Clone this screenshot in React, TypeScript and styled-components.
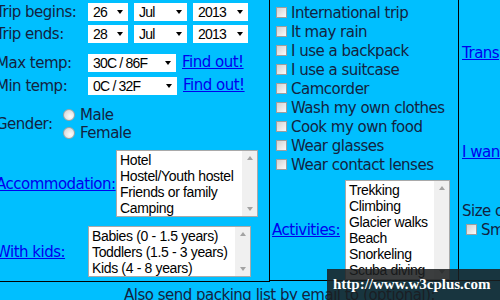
import React from "react";
import styled, { createGlobalStyle } from "styled-components";

const GlobalStyle = createGlobalStyle`
  html, body {
    margin: 0;
    padding: 0;
  }
  body {
    width: 500px;
    height: 300px;
    overflow: hidden;
    background: #00bfff;
    color: #13233f;
    font-family: "DejaVu Sans", Verdana, sans-serif;
    font-size: 15px;
    letter-spacing: -0.5px;
  }
`;

const Page = styled.div`
  position: relative;
  width: 500px;
  height: 300px;
  overflow: hidden;
`;

const FormTable = styled.div`
  display: grid;
  grid-template-columns: 274px 189px 120px;
  margin-left: -4px;
  width: 583px;
`;

const Cell = styled.div<{ $border?: boolean }>`
  height: 281px;
  border-right: ${(p) => (p.$border ? "1px solid #000" : "none")};
  border-bottom: 1px solid #000;
  overflow: hidden;
  white-space: nowrap;
`;

const LeftCol = styled(Cell)`
  display: flex;
  flex-direction: column;
`;

const MidCol = styled(Cell)`
  display: flex;
  flex-direction: column;
  padding-top: 3px;
  box-sizing: border-box;
`;

const RightCol = styled(Cell)`
  display: flex;
  flex-direction: column;
  padding: 44px 0 0 3px;
  box-sizing: border-box;
`;

const FieldRow = styled.div<{ $mt?: number; $pl?: number }>`
  display: flex;
  align-items: center;
  gap: 6px;
  margin-top: ${(p) => p.$mt ?? 0}px;
  padding-left: ${(p) => p.$pl ?? 0}px;
`;

const Label = styled.span<{ $w: number }>`
  flex: 0 0 auto;
  width: ${(p) => p.$w - 6}px;
  line-height: 18px;
`;

const LinkLabel = styled(Label)`
  color: #0000ee;
  text-decoration: underline;
`;

const Link = styled.a`
  color: #0000ee;
  text-decoration: underline;
  line-height: 19px;
  cursor: pointer;
`;

const Select = styled.div<{ $w: number }>`
  display: flex;
  align-items: center;
  justify-content: space-between;
  box-sizing: border-box;
  width: ${(p) => p.$w}px;
  height: 18px;
  padding: 0 5px;
  background: #fff;
  color: #000;
  font-family: "Liberation Sans", Arial, sans-serif;
  font-size: 14px;
  letter-spacing: -0.8px;
`;

const Caret = styled.span`
  width: 0;
  height: 0;
  border-left: 3.5px solid transparent;
  border-right: 3.5px solid transparent;
  border-top: 4px solid #000;
`;

const RadioGroup = styled.div`
  display: flex;
  flex-direction: column;
`;

const Choice = styled.div<{ $h?: number }>`
  display: flex;
  align-items: center;
  gap: 5px;
  height: ${(p) => p.$h ?? 18}px;
`;

const Radio = styled.span`
  width: 12px;
  height: 12px;
  box-sizing: border-box;
  border-radius: 50%;
  border: 1px solid #a2a2a2;
  background: radial-gradient(circle at 65% 65%, #fdfdfd, #cfcfcf);
`;

const Check = styled.span`
  flex: 0 0 auto;
  width: 11px;
  height: 11px;
  box-sizing: border-box;
  border: 1px solid #9e9e9e;
  background: linear-gradient(135deg, #d2d2d2, #fafafa);
`;

const CheckRow = styled(Choice)`
  gap: 4px;
  height: 19px;
  padding-left: 6px;
`;

const ListBox = styled.div<{ $w: number; $h: number }>`
  display: flex;
  box-sizing: border-box;
  width: ${(p) => p.$w}px;
  height: ${(p) => p.$h}px;
  background: #fff;
  border: 1px solid #a9a9a9;
  color: #000;
  font-family: "Liberation Sans", Arial, sans-serif;
  font-size: 14px;
  letter-spacing: -0.35px;
`;

const Options = styled.div`
  flex: 1;
  padding: 1px 0 0 3px;
  overflow: hidden;
  line-height: 16px;
`;

const ScrollTrack = styled.div`
  flex: 0 0 15px;
  display: flex;
  flex-direction: column;
  justify-content: space-between;
  align-items: center;
  padding: 5px 0;
  background: #f0f0f0;
`;

const ScrollArrow = styled.span<{ $down?: boolean }>`
  width: 0;
  height: 0;
  border-left: 3.5px solid transparent;
  border-right: 3.5px solid transparent;
  ${(p) => (p.$down ? "border-top" : "border-bottom")}: 4px solid #a3a3a3;
`;

const SizeText = styled.div`
  line-height: 17px;
  margin-top: 41px;
`;

const Footer = styled.div`
  padding: 4px 0 0 124px;
  line-height: 18px;
  white-space: nowrap;
`;

const Watermark = styled.div`
  position: absolute;
  right: 0;
  bottom: 0;
  width: 167px;
  height: 31px;
  padding-left: 6px;
  display: flex;
  align-items: center;
  background: rgba(28, 30, 32, 0.86);
  color: #fff;
  font-family: "Liberation Serif", "Times New Roman", serif;
  font-weight: bold;
  font-size: 15px;
  letter-spacing: 0;
`;

const List = ({ w, h, items }: { w: number; h: number; items: string[] }) => (
  <ListBox $w={w} $h={h}>
    <Options>
      {items.map((i) => (
        <div key={i}>{i}</div>
      ))}
    </Options>
    <ScrollTrack>
      <ScrollArrow />
      <ScrollArrow $down />
    </ScrollTrack>
  </ListBox>
);

const Dropdown = ({ w, value }: { w: number; value: string }) => (
  <Select $w={w}>
    {value}
    <Caret />
  </Select>
);

const checks = [
  "International trip",
  "It may rain",
  "I use a backpack",
  "I use a suitcase",
  "Camcorder",
  "Wash my own clothes",
  "Cook my own food",
  "Wear glasses",
  "Wear contact lenses",
];

export default function App() {
  return (
    <Page>
      <GlobalStyle />
      <FormTable>
        <LeftCol $border>
          <FieldRow $mt={3}>
            <Label $w={92}>Trip begins:</Label>
            <Dropdown w={40} value="26" />
            <Dropdown w={53} value="Jul" />
            <Dropdown w={55} value="2013" />
          </FieldRow>
          <FieldRow $mt={4}>
            <Label $w={92}>Trip ends:</Label>
            <Dropdown w={40} value="28" />
            <Dropdown w={53} value="Jul" />
            <Dropdown w={55} value="2013" />
          </FieldRow>
          <FieldRow $mt={10}>
            <Label $w={92}>Max temp:</Label>
            <Dropdown w={88} value="30C / 86F" />
            <Link>Find out!</Link>
          </FieldRow>
          <FieldRow $mt={4}>
            <Label $w={92}>Min temp:</Label>
            <Dropdown w={89} value="0C / 32F" />
            <Link>Find out!</Link>
          </FieldRow>
          <FieldRow $mt={11}>
            <Label $w={67}>Gender:</Label>
            <RadioGroup>
              <Choice>
                <Radio />
                Male
              </Choice>
              <Choice>
                <Radio />
                Female
              </Choice>
            </RadioGroup>
          </FieldRow>
          <FieldRow $mt={8}>
            <LinkLabel $w={120}>Accommodation:</LinkLabel>
            <List
              w={142}
              h={67}
              items={["Hotel", "Hostel/Youth hostel", "Friends or family", "Camping"]}
            />
          </FieldRow>
          <FieldRow $mt={9}>
            <LinkLabel $w={92}>With kids:</LinkLabel>
            <List
              w={163}
              h={51}
              items={["Babies (0 - 1.5 years)", "Toddlers (1.5 - 3 years)", "Kids (4 - 8 years)"]}
            />
          </FieldRow>
        </LeftCol>

        <MidCol $border>
          {checks.map((c) => (
            <CheckRow key={c}>
              <Check />
              {c}
            </CheckRow>
          ))}
          <FieldRow $mt={6} $pl={2}>
            <LinkLabel $w={73}>Activities:</LinkLabel>
            <List
              w={105}
              h={100}
              items={["Trekking", "Climbing", "Glacier walks", "Beach", "Snorkeling", "Scuba diving", "Skiing"]}
            />
          </FieldRow>
        </MidCol>

        <RightCol>
          <Link>Transportation:</Link>
          <Link style={{ marginTop: 80 }}>I want to pack:</Link>
          <SizeText>Size of luggage:</SizeText>
          <CheckRow style={{ paddingLeft: 4 }}>
            <Check />
            Small
          </CheckRow>
        </RightCol>
      </FormTable>
      <Footer>Also send packing list by email to (optional):</Footer>
      <Watermark>http://www.w3cplus.com</Watermark>
    </Page>
  );
}
